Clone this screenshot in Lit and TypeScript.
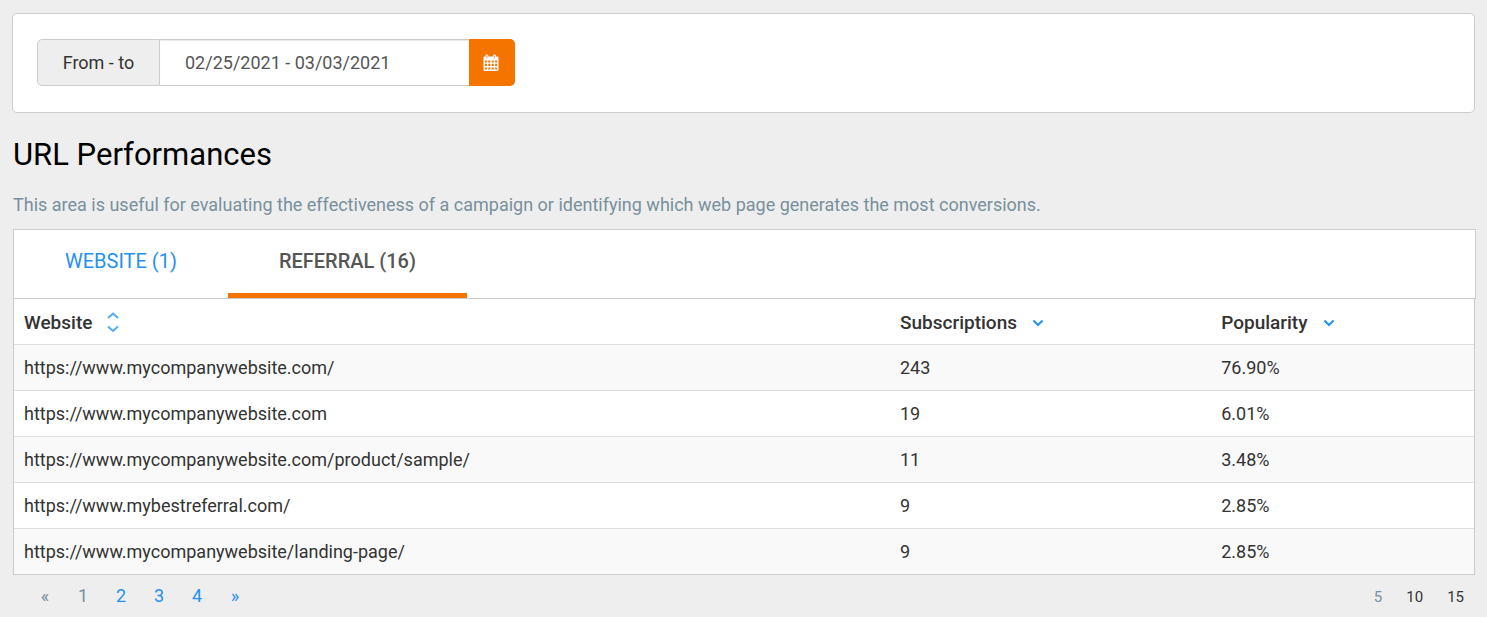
import { LitElement, html, css, svg } from "lit";
import { customElement, state } from "lit/decorators.js";

interface Row {
  url: string;
  subscriptions: number;
  popularity: string;
}

const ROWS: Row[] = [
  { url: "https://www.mycompanywebsite.com/", subscriptions: 243, popularity: "76.90%" },
  { url: "https://www.mycompanywebsite.com", subscriptions: 19, popularity: "6.01%" },
  { url: "https://www.mycompanywebsite.com/product/sample/", subscriptions: 11, popularity: "3.48%" },
  { url: "https://www.mybestreferral.com/", subscriptions: 9, popularity: "2.85%" },
  { url: "https://www.mycompanywebsite/landing-page/", subscriptions: 9, popularity: "2.85%" },
];

const calendarIcon = html`<svg class="calendar" width="16" height="18" viewBox="0 0 16 18" aria-hidden="true">
  <path
    fill="#fff"
    fill-rule="evenodd"
    d="M1.5 2.5H2.5V1.6Q2.5 .5 3.6 .5H4.2Q5.3 .5 5.3 1.6V2.5H10.2V1.6Q10.2 .5 11.3 .5H11.9Q13 .5 13 1.6V2.5H14.2Q15.5 2.5 15.5 3.8V15.7Q15.5 17 14.2 17H1.8Q.5 17 .5 15.7V3.8Q.5 2.5 1.5 2.5ZM3.6 1.6V4.4H4.2V1.6ZM11.3 1.6V4.4H11.9V1.6ZM1.9 6.4V8.4H3.9V6.4ZM5.2 6.4V8.4H7.3V6.4ZM8.7 6.4V8.4H10.8V6.4ZM12.1 6.4V8.4H14.1V6.4ZM1.9 9.8V12H3.9V9.8ZM5.2 9.8V12H7.3V9.8ZM8.7 9.8V12H10.8V9.8ZM12.1 9.8V12H14.1V9.8ZM1.9 13.4V15.5H3.9V13.4ZM5.2 13.4V15.5H7.3V13.4ZM8.7 13.4V15.5H10.8V13.4ZM12.1 13.4V15.5H14.1V13.4Z"
  />
</svg>`;

const chevronDown = svg`<path d="M1.5 1.5L6 6L10.5 1.5" />`;

const sortDown = html`<svg class="sort" width="12" height="8" viewBox="0 0 12 8" aria-hidden="true">${chevronDown}</svg>`;

const sortBoth = html`<svg class="sort both" width="12" height="22" viewBox="0 0 12 22" aria-hidden="true">
  <path d="M1 6L6 1.5L11 6" />
  <path d="M1 14.5L6 19L11 14.5" />
</svg>`;

@customElement("app-root")
export class AppRoot extends LitElement {
  @state() private tab = "referral";

  static styles = css`
    :host {
      display: block;
      box-sizing: border-box;
      min-height: 100vh;
      padding: 13px 12px 0;
      background: #eee;
      color: #333;
      font: 400 18px/24px Roboto, sans-serif;
    }
    * {
      box-sizing: border-box;
    }
    button,
    input {
      font: inherit;
      color: inherit;
      margin: 0;
    }
    button {
      border: 0;
      padding: 0;
      background: none;
      cursor: pointer;
    }
    a {
      color: #2490f5;
      text-decoration: none;
    }
    .panel {
      padding: 25px 24px;
      height: 100px;
      background: #fff;
      border: 1px solid #ccc;
      border-radius: 5px;
    }
    .range {
      display: flex;
      width: 478px;
      max-width: 100%;
      height: 47px;
    }
    .range-label {
      display: flex;
      align-items: center;
      justify-content: center;
      flex: 0 0 123px;
      background: #eee;
      border: 1px solid #ccc;
      border-radius: 5px 0 0 5px;
    }
    .range-input {
      flex: 1;
      min-width: 0;
      padding: 0 25px;
      color: #555;
      background: #fff;
      border: 1px solid #ccc;
      border-width: 1px 0;
      border-radius: 0;
      box-shadow: inset 0 1px 1px rgba(0, 0, 0, 0.08);
    }
    .range-button {
      display: flex;
      align-items: center;
      justify-content: center;
      flex: 0 0 46px;
      padding-right: 2px;
      background: #f57400;
      border-radius: 0 5px 5px 0;
    }
    h1 {
      margin: 22px 1px 0;
      color: #000;
      font-size: 31px;
      line-height: 40px;
      font-weight: 400;
    }
    .intro {
      margin: 18px 1px 12px;
      color: #78909c;
    }
    .tabs {
      display: flex;
      margin: 0 -1px 0 1px;
      height: 70px;
      background: #fff;
      border: 1px solid #ccc;
    }
    .tab {
      padding: 0 51px 1px;
      color: #2490f5;
      font-size: 20px;
      border-bottom: 5px solid transparent;
    }
    .tab.active {
      color: #555;
      font-weight: 500;
      border-bottom-color: #f57400;
    }
    table {
      width: 100%;
      table-layout: fixed;
      border-collapse: separate;
      border-spacing: 0;
      background: #fff;
    }
    .table-wrap {
      margin-left: 1px;
      border: 1px solid #ccc;
      border-top: 0;
    }
    th,
    td {
      height: 46px;
      padding: 0 10px;
      text-align: left;
    }
    td {
      border-top: 1px solid #ddd;
    }
    tbody tr:nth-child(odd) {
      background: #f9f9f9;
    }
    .col-url {
      width: 60%;
    }
    .col-subs {
      width: 22%;
    }
    th {
      height: 45px;
      padding-top: 2px;
    }
    .sorter {
      display: inline-flex;
      align-items: center;
      gap: 15px;
      font-size: 19px;
      font-weight: 500;
    }
    .sort {
      fill: none;
      stroke: #2490f5;
      stroke-width: 2;
    }
    .sort.both {
      stroke: #4dabf7;
    }
    .footer {
      display: flex;
      justify-content: space-between;
      padding: 9px 11px 0 14px;
    }
    .pages,
    .sizes {
      display: flex;
    }
    .pages > * {
      width: 38px;
      text-align: center;
    }
    .muted {
      color: #78909c;
    }
    .sizes {
      gap: 24px;
      font-size: 15px;
      line-height: 26px;
    }
    .size {
      color: #333;
    }
  `;

  private renderTab(id: string, label: string) {
    const active = this.tab === id;
    return html`<button
      class="tab ${active ? "active" : ""}"
      role="tab"
      aria-selected=${active}
      @click=${() => (this.tab = id)}
    >${label}</button>`;
  }

  render() {
    return html`
      <section class="panel">
        <div class="range">
          <label class="range-label" for="range">From - to</label>
          <input class="range-input" id="range" type="text" value="02/25/2021 - 03/03/2021" />
          <button class="range-button" aria-label="Open calendar">${calendarIcon}</button>
        </div>
      </section>
      <h1>URL Performances</h1>
      <p class="intro">
        This area is useful for evaluating the effectiveness of a campaign or identifying which web page generates the
        most conversions.
      </p>
      <div class="tabs" role="tablist">
        ${this.renderTab("website", "WEBSITE (1)")}${this.renderTab("referral", "REFERRAL (16)")}
      </div>
      <div class="table-wrap">
        <table>
          <thead>
            <tr>
              <th class="col-url"><button class="sorter">Website ${sortBoth}</button></th>
              <th class="col-subs"><button class="sorter">Subscriptions ${sortDown}</button></th>
              <th><button class="sorter">Popularity ${sortDown}</button></th>
            </tr>
          </thead>
          <tbody>
            ${ROWS.map(
              (r) => html`<tr>
                <td>${r.url}</td>
                <td>${r.subscriptions}</td>
                <td>${r.popularity}</td>
              </tr>`
            )}
          </tbody>
        </table>
      </div>
      <footer class="footer">
        <nav class="pages" aria-label="Pages">
          <span class="muted">«</span>
          <span class="muted">1</span>
          <a href="#2">2</a>
          <a href="#3">3</a>
          <a href="#4">4</a>
          <a href="#next">»</a>
        </nav>
        <nav class="sizes" aria-label="Rows per page">
          <span class="muted">5</span>
          <a class="size" href="#10">10</a>
          <a class="size" href="#15">15</a>
        </nav>
      </footer>
    `;
  }
}
